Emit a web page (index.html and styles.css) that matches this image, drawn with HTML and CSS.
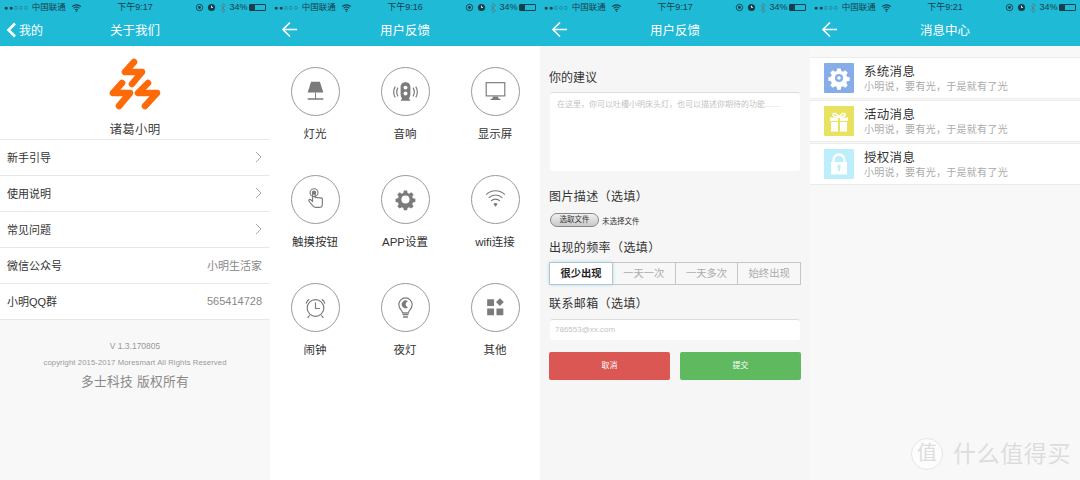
FILE: index.html
```html
<!DOCTYPE html>
<html lang="zh">
<head>
<meta charset="utf-8">
<title>诸葛小明</title>
<link rel="stylesheet" href="styles.css">
</head>
<body>
<svg class="defs" width="0" height="0">
  <defs>
    <g id="status-wifi"><path d="M0 3.2a8.2 8.2 0 0 1 11 0M2 5.4a5.2 5.2 0 0 1 7 0M3.900 7.400a2.400 2.400 0 0 1 3.200 0" fill="none" stroke="#17404c" stroke-width="1.300"/><circle cx="5.500" cy="9" r="1" fill="#17404c"/></g>
    <g id="arrow"><path d="M1 9.500H15M8 2.500 1 9.500l7 7" fill="none" stroke="#fff" stroke-width="1.600"/></g>
    <g id="gear-shape"><path d="M10 1h4l.6 3 2 .9 2.600-1.700 2.800 2.800-1.700 2.600.9 2 3 .6v4l-3 .6-.9 2 1.700 2.600-2.800 2.800-2.600-1.700-2 .9-.6 3h-4l-.6-3-2-.9-2.600 1.700-2.800-2.800 1.700-2.600-.9-2-3-.6v-4l3-.6.9-2-1.700-2.600 2.800-2.800 2.600 1.700 2-.9z"/></g>
  </defs>
</svg>
<main class="screens">

  <section class="screen screen-about">
    <div class="status"><div class="st-left"><span class="dots">●●○○○</span><span>中国联通</span><svg class="st-wifi" viewBox="0 0 11 10"><use href="#status-wifi"/></svg></div><div class="st-time">下午9:17</div><div class="st-right"><svg class="st-ic" viewBox="0 0 10 10"><circle cx="5" cy="5" r="3.600" fill="none" stroke="#17404c"/><circle cx="5" cy="5" r="1.600" fill="#17404c"/></svg><svg class="st-ic" viewBox="0 0 10 10"><circle cx="5" cy="5" r="4" fill="#17404c"/><path d="M5 3v2h1.500" stroke="#fff" fill="none"/></svg><svg class="st-bt" viewBox="0 0 6 10"><path d="M.5 2.500l5 5L3 9.700V.3l2.500 2.200-5 5" fill="none" stroke="#55808c" stroke-width=".8"/></svg><span>34%</span><span class="batt"><span class="batt-fill"></span></span></div></div>
    <header class="nav"><span class="nav-back"><svg class="chev" viewBox="0 0 11 16"><path d="M9 1.500 2.500 8 9 14.500" fill="none" stroke="#fff" stroke-width="2.600"/></svg>我的</span><h1>关于我们</h1></header>
    <div class="brand">
      <svg class="logo" viewBox="0 0 54 54"><g fill="none" stroke="#ff6a08" stroke-width="6.600" stroke-linecap="round" stroke-linejoin="round"><path d="M26 4 17 14H34L24 26"/><path d="M14 25 5 35H22L11 48"/><path d="M40 25 30 35H49L37 48"/></g></svg>
      <div class="brand-name">诸葛小明</div>
    </div>
    <ul class="list">
      <li class="row"><span>新手引导</span><svg class="go" viewBox="0 0 7 12"><path d="M1 1l5 5-5 5" fill="none" stroke="#aaa"/></svg></li>
      <li class="row"><span>使用说明</span><svg class="go" viewBox="0 0 7 12"><path d="M1 1l5 5-5 5" fill="none" stroke="#aaa"/></svg></li>
      <li class="row"><span>常见问题</span><svg class="go" viewBox="0 0 7 12"><path d="M1 1l5 5-5 5" fill="none" stroke="#aaa"/></svg></li>
      <li class="row"><span>微信公众号</span><span class="val">小明生活家</span></li>
      <li class="row"><span>小明QQ群</span><span class="val">565414728</span></li>
    </ul>
    <footer class="about-foot">
      <div class="ver">V 1.3.170805</div>
      <div class="copy">copyright 2015-2017 Moresmart All Rights Reserved</div>
      <div class="owner">多士科技 版权所有</div>
    </footer>
  </section>

  <section class="screen screen-topics">
    <div class="status"><div class="st-left"><span class="dots">●●○○○</span><span>中国联通</span><svg class="st-wifi" viewBox="0 0 11 10"><use href="#status-wifi"/></svg></div><div class="st-time">下午9:16</div><div class="st-right"><svg class="st-ic" viewBox="0 0 10 10"><circle cx="5" cy="5" r="3.600" fill="none" stroke="#17404c"/><circle cx="5" cy="5" r="1.600" fill="#17404c"/></svg><svg class="st-ic" viewBox="0 0 10 10"><circle cx="5" cy="5" r="4" fill="#17404c"/><path d="M5 3v2h1.500" stroke="#fff" fill="none"/></svg><svg class="st-bt" viewBox="0 0 6 10"><path d="M.5 2.500l5 5L3 9.700V.3l2.500 2.200-5 5" fill="none" stroke="#55808c" stroke-width=".8"/></svg><span>34%</span><span class="batt"><span class="batt-fill"></span></span></div></div>
    <header class="nav"><svg class="nav-arrow" viewBox="0 0 16 19"><use href="#arrow"/></svg><h1>用户反馈</h1></header>
    <div class="topics">
      <div class="topic"><span class="circle"><svg viewBox="0 0 48 48"><path class="f" d="M19.500 14h9l3.500 11H16z"/><path class="f" d="M23.500 25h1v6h-1zM16 31h16v1.300H16z"/></svg></span><span>灯光</span></div>
      <div class="topic"><span class="circle"><svg viewBox="0 0 48 48"><path class="f" d="M24 14.500c3.500 0 5 2.200 5 5v7c0 2.500-1 3.500-1.500 4.500l1.500 2.500H19l1.500-2.500c-.5-1-1.500-2-1.500-4.500v-7c0-2.800 1.500-5 5-5z"/><circle cx="24" cy="20" r="2" fill="#fff"/><circle cx="24" cy="26" r="2" fill="#fff"/><path class="s" d="M16.300 20a9 9 0 0 0 0 9M13.500 19a11 11 0 0 0 0 11M31.700 20a9 9 0 0 1 0 9M34.500 19a11 11 0 0 1 0 11"/></svg></span><span>音响</span></div>
      <div class="topic"><span class="circle"><svg viewBox="0 0 48 48"><rect class="s" x="14.500" y="15" width="19" height="13.500" stroke-width="1.300"/><path class="f" d="M21.500 29h5l.8 2.500H29v1.300H19v-1.300h1.700z"/></svg></span><span>显示屏</span></div>
      <div class="topic"><span class="circle"><svg viewBox="0 0 48 48"><circle class="s" cx="22.500" cy="17" r="4"/><circle class="f" cx="22.500" cy="17" r="2.200"/><path class="s" stroke-width="1.200" d="M21 17.500v8.500l-1.800-1.700c-1.300-1-2.700.2-1.800 1.500l4 4.800c.9 1 1.800 1.400 2.800 1.400h3.800c2.200 0 3-1.800 3-3.500v-5c0-1.400-2-1.600-2.400-.4 0-1.400-2-1.600-2.400-.3 0-1.400-2.300-1.500-2.500-.3v-5c0-1.600-2.700-1.600-2.700 0z"/></svg></span><span>触摸按钮</span></div>
      <div class="topic"><span class="circle"><svg viewBox="0 0 48 48"><g transform="translate(14 14) scale(.83)"><use href="#gear-shape" class="f"/><circle cx="12" cy="12" r="5" fill="#fff"/></g></svg></span><span>APP设置</span></div>
      <div class="topic"><span class="circle"><svg viewBox="0 0 48 48"><path class="s" stroke-width="1.300" d="M14.500 19a13.500 13.500 0 0 1 19 0M17 22.300a10 10 0 0 1 14 0M19.500 25.400a6.500 6.500 0 0 1 9 0"/><path class="f" d="M24 31.500l-2.200-3a3.500 3.500 0 0 1 4.400 0z"/></svg></span><span>wifi连接</span></div>
      <div class="topic"><span class="circle"><svg viewBox="0 0 48 48"><circle class="s" cx="24" cy="24.500" r="8.500" stroke-width="1.500"/><path class="s" stroke-width="1.400" d="M24 19v6h4.500M18 32l-2 2.500M30 32l2 2.500M14.500 20a6 6 0 0 1 3-4.300M33.500 20a6 6 0 0 0-3-4.300"/></svg></span><span>闹钟</span></div>
      <div class="topic"><span class="circle"><svg viewBox="0 0 48 48"><path class="s" stroke-width="1.300" d="M21 29.500c0-2.500-3.800-3.500-3.800-8.500a6.800 6.800 0 0 1 13.600 0c0 5-3.800 6-3.800 8.500z"/><path class="f" d="M21 30.500h6V32h-6zM21.500 33h5v1.500h-5zM26.500 17.500a4 4 0 1 0 0 6.500 3.400 3.400 0 0 1 0-6.500z"/></svg></span><span>夜灯</span></div>
      <div class="topic"><span class="circle"><svg viewBox="0 0 48 48"><path class="f" d="M15.500 15.500h7v7h-7zM15.500 25h7v7h-7zM25 25h7v7h-7zM28.500 14.500l4 4-4 4-4-4z"/></svg></span><span>其他</span></div>
    </div>
  </section>

  <section class="screen screen-form">
    <div class="status"><div class="st-left"><span class="dots">●●○○○</span><span>中国联通</span><svg class="st-wifi" viewBox="0 0 11 10"><use href="#status-wifi"/></svg></div><div class="st-time">下午9:17</div><div class="st-right"><svg class="st-ic" viewBox="0 0 10 10"><circle cx="5" cy="5" r="3.600" fill="none" stroke="#17404c"/><circle cx="5" cy="5" r="1.600" fill="#17404c"/></svg><svg class="st-ic" viewBox="0 0 10 10"><circle cx="5" cy="5" r="4" fill="#17404c"/><path d="M5 3v2h1.500" stroke="#fff" fill="none"/></svg><svg class="st-bt" viewBox="0 0 6 10"><path d="M.5 2.500l5 5L3 9.700V.3l2.500 2.200-5 5" fill="none" stroke="#55808c" stroke-width=".8"/></svg><span>34%</span><span class="batt"><span class="batt-fill"></span></span></div></div>
    <header class="nav"><svg class="nav-arrow" viewBox="0 0 16 19"><use href="#arrow"/></svg><h1>用户反馈</h1></header>
    <form class="form">
      <div class="label label-first">你的建议</div>
      <div class="field area">在这里，你可以吐槽小明床头灯，也可以描述你期待的功能……</div>
      <div class="label label-pic">图片描述（选填）</div>
      <div class="file"><span class="file-btn">选取文件</span><span>未选择文件</span></div>
      <div class="label label-freq">出现的频率（选填）</div>
      <div class="segs"><span class="seg on">很少出现</span><span class="seg">一天一次</span><span class="seg">一天多次</span><span class="seg">始终出现</span></div>
      <div class="label label-mail">联系邮箱（选填）</div>
      <div class="field mail">786553@xx.com</div>
      <div class="actions"><span class="btn cancel">取消</span><span class="btn submit">提交</span></div>
    </form>
  </section>

  <section class="screen screen-msg">
    <div class="status"><div class="st-left"><span class="dots">●●○○○</span><span>中国联通</span><svg class="st-wifi" viewBox="0 0 11 10"><use href="#status-wifi"/></svg></div><div class="st-time">下午9:21</div><div class="st-right"><svg class="st-ic" viewBox="0 0 10 10"><circle cx="5" cy="5" r="3.600" fill="none" stroke="#17404c"/><circle cx="5" cy="5" r="1.600" fill="#17404c"/></svg><svg class="st-ic" viewBox="0 0 10 10"><circle cx="5" cy="5" r="4" fill="#17404c"/><path d="M5 3v2h1.500" stroke="#fff" fill="none"/></svg><svg class="st-bt" viewBox="0 0 6 10"><path d="M.5 2.500l5 5L3 9.700V.3l2.500 2.200-5 5" fill="none" stroke="#55808c" stroke-width=".8"/></svg><span>34%</span><span class="batt"><span class="batt-fill"></span></span></div></div>
    <header class="nav"><svg class="nav-arrow" viewBox="0 0 16 19"><use href="#arrow"/></svg><h1>消息中心</h1></header>
    <ul class="msgs">
      <li class="msg"><span class="tile blue"><svg viewBox="0 0 30 30"><g transform="translate(4.500 4.500) scale(.875)" fill="#fff"><use href="#gear-shape"/></g><circle cx="15" cy="15" r="4" fill="#86ade8"/><circle cx="15" cy="15" r="1.800" fill="#fff"/></svg></span><div><div class="msg-title">系统消息</div><div class="msg-sub">小明说，要有光，于是就有了光</div></div></li>
      <li class="msg"><span class="tile yellow"><svg viewBox="0 0 30 30"><path fill="#fff" d="M6 11.500h8V15H6zM16 11.500h8V15h-8zM7 16h7v9.500H7zM16 16h7v9.500h-7z"/><path fill="none" stroke="#fff" stroke-width="1.600" d="M15 11c-2-4-6-4.500-6-2.500S12 11 15 11c3 0 6-.5 6-2.500S17 7 15 11z"/></svg></span><div><div class="msg-title">活动消息</div><div class="msg-sub">小明说，要有光，于是就有了光</div></div></li>
      <li class="msg"><span class="tile cyan"><svg viewBox="0 0 30 30"><path fill="none" stroke="#fff" stroke-width="2.400" d="M9.500 14v-3a5.500 5.500 0 0 1 11 0v3"/><rect x="7" y="13" width="16" height="12.500" fill="#fff"/><path fill="#bdeefb" d="M14 17h2v5h-2z"/><circle cx="15" cy="17.500" r="1.800" fill="#bdeefb"/></svg></span><div><div class="msg-title">授权消息</div><div class="msg-sub">小明说，要有光，于是就有了光</div></div></li>
    </ul>
  </section>
</main>
<div class="watermark"><span class="wm-mark">值</span><span class="wm-text">什么值得买</span></div>
</body>
</html>
```

FILE: styles.css
```css
* { box-sizing: border-box; }
html, body { margin: 0; padding: 0; }
body {
  width: 1080px; height: 480px; overflow: hidden; position: relative;
  font-family: "Liberation Sans", "Noto Sans CJK SC", sans-serif;
  color: #333; background: #f8f8f8;
}
ul { list-style: none; margin: 0; padding: 0; }
.defs { position: absolute; }
.screens { display: flex; width: 1080px; height: 480px; }
.screen { width: 270px; height: 480px; display: flex; flex-direction: column; overflow: hidden; }

.status {
  height: 15px; background: #1fbad6; color: #17404c; font-size: 8.500px; line-height: 15px;
  display: flex; align-items: center; position: relative; padding: 0 4px 0 4px;
}
.st-left { display: flex; align-items: center; gap: 3px; }
.dots { font-size: 7px; letter-spacing: .7px; }
.st-wifi { width: 9px; height: 8px; margin-left: 3px; }
.st-time { position: absolute; left: 0; right: 0; text-align: center; font-size: 9px; }
.st-right { margin-left: auto; display: flex; align-items: center; gap: 3.500px; }
.st-right > span:nth-last-child(2) { font-size: 9px; }
.st-ic { width: 9px; height: 9px; }
.st-bt { width: 6px; height: 10px; }
.batt { width: 17px; height: 7px; border: 1px solid #17404c; display: block; margin-left: -2px; border-radius: 1px; }
.batt-fill { display: block; width: 5px; height: 100%; background: #17404c; }

.nav {
  height: 31px; background: #1fbad6; color: #fff; position: relative;
  display: flex; align-items: center; padding: 0 0 2px 12px;
}
.nav h1 {
  position: absolute; left: 0; right: 0; top: 7px; margin: 0; text-align: center;
  font-size: 12.500px; line-height: 18px; font-weight: 400;
}
.nav-back { display: flex; align-items: center; font-size: 12px; margin-left: -6px; gap: 2px; }
.chev { width: 11px; height: 16px; }
.nav-arrow { width: 16px; height: 19px; }

/* about */
.screen-about { background: #f8f8f8; }
.brand { background: #fff; height: 93px; display: flex; flex-direction: column; align-items: center; padding-top: 12px; }
.logo { width: 54px; height: 54px; flex: none; }
.brand-name { font-size: 12.500px; line-height: 18px; margin-top: 9px; color: #444; letter-spacing: .3px; }
.list { background: #fff; }
.row {
  height: 36px; padding: 0 8px 2px 7px; display: flex; justify-content: space-between; align-items: center;
  border-top: 1px solid #e8e8e8; font-size: 11px; color: #333;
}
.row:last-child { border-bottom: 1px solid #e8e8e8; height: 37px; }
.go { width: 7px; height: 12px; }
.val { color: #888; }
.about-foot { text-align: center; color: #999; padding-top: 20px; }
.ver { font-size: 8.500px; line-height: 12px; }
.copy { font-size: 7.700px; line-height: 10px; margin-top: 6px; letter-spacing: .1px; white-space: nowrap; }
.owner { font-size: 12.700px; line-height: 18px; margin-top: 5px; color: #888; letter-spacing: .35px; }

/* topics */
.screen-topics { background: #fff; }
.topics { display: grid; grid-template-columns: repeat(3, 90px); grid-auto-rows: 108px; padding-top: 21px; }
.topic { display: flex; flex-direction: column; align-items: center; font-size: 11.500px; color: #333; line-height: 16px; gap: 10px; }
.circle { width: 49px; height: 49px; border: 1px solid #999; border-radius: 50%; display: block; }
.circle svg { width: 47px; height: 47px; display: block; }
.f { fill: #7b7b7b; }
.s { fill: none; stroke: #7b7b7b; stroke-width: 1.200; }

/* form */
.screen-form { background: #f6f6f6; }
.form { padding: 0 10px 0 9px; display: flex; flex-direction: column; }
.label { font-size: 12px; line-height: 18px; color: #333; letter-spacing: .4px; }
.label-first { margin-top: 23px; letter-spacing: 0; }
.field { background: #fff; border-top: 1px solid #ddd; border-radius: 3px; margin-left: 1px; color: #c4c4c4; }
.area { height: 79px; margin-top: 5px; padding: 6px 7px; font-size: 8px; line-height: 12px; white-space: nowrap; }
.label-pic { margin-top: 17px; }
.file { display: flex; align-items: center; gap: 3px; margin-top: 7px; font-size: 7.500px; color: #333; margin-left: 1px; }
.file-btn { width: 49px; height: 14px; border: 1px solid #888; border-radius: 7px; background: linear-gradient(#f0f0f0, #c9c9c9); text-align: center; line-height: 12px; }
.label-freq { margin-top: 12px; }
.segs { display: flex; margin-top: 5px; height: 23px; border: 1px solid #c6c6c6; width: 252px; background: #f7f7f7; }
.seg { flex: 1; text-align: center; line-height: 21px; font-size: 10.300px; color: #aaa; border-left: 1px solid #c6c6c6; }
.seg:first-child { border-left: 0; }
.seg.on { background: #fff; color: #222; font-weight: 700; flex: 0 0 62px; box-shadow: 0 0 4px #8cc6e4; position: relative; }
.label-mail { margin-top: 10px; }
.mail { height: 21px; margin-top: 6px; padding-left: 5px; font-size: 8px; line-height: 20px; width: 250px; }
.actions { display: flex; justify-content: space-between; margin-top: 12px; width: 252px; }
.btn { width: 121px; height: 28px; border-radius: 2px; color: #fff; opacity: .98; font-size: 8px; line-height: 28px; text-align: center; }
.cancel { background: #db5450; }
.submit { background: #5cb85c; }

/* messages */
.screen-msg { background: #f8f8f8; }
.msgs { margin-top: 11px; display: flex; flex-direction: column; gap: 1px; }
.msg { height: 42px; background: #fff; border-top: 1px solid #ececec; border-bottom: 1px solid #ececec; padding: 5px 0 0 14px; display: flex; gap: 10px; }
.tile { width: 30px; height: 30px; border-radius: 1px; display: block; flex: none; }
.tile svg { display: block; width: 30px; height: 30px; }
.blue { background: #86ade8; }
.yellow { background: #e9e25e; }
.cyan { background: #bdeefb; }
.msg-title { font-size: 12.500px; line-height: 15px; color: #333; letter-spacing: .3px; margin-top: 2px; }
.msg-sub { font-size: 10px; line-height: 14px; color: #aaa; letter-spacing: .28px; }

/* overlay watermark */
.watermark { position: absolute; right: 9px; bottom: 10px; display: flex; align-items: center; gap: 10px; color: #dcdcdc; text-shadow: 0 0 1px #fff; }
.wm-mark { width: 32px; height: 32px; border-radius: 50%; background: #fdfdfd; border: 1px solid #e6e6e6; font-size: 20px; line-height: 29px; text-align: center; }
.wm-text { font-size: 23px; line-height: 30px; letter-spacing: .6px; }
```
